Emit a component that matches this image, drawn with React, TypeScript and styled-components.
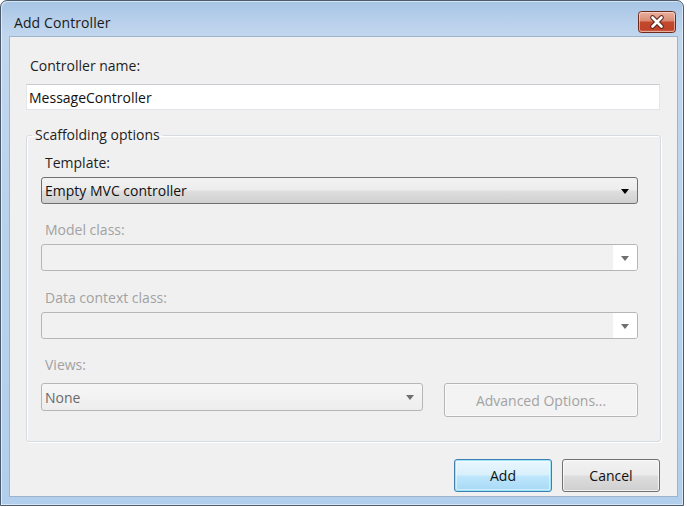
import React from "react";
import styled, { createGlobalStyle } from "styled-components";

const GlobalStyle = createGlobalStyle`
  html, body {
    margin: 0;
    padding: 0;
    width: 687px;
    height: 507px;
    overflow: hidden;
    background: #ffffff;
  }
  * { box-sizing: border-box; }
`;

const FONT = `"Open Sans", "Noto Sans", "DejaVu Sans", sans-serif`;

const Window = styled.div`
  width: 684px;
  height: 506px;
  border: 1px solid #4d5b6f;
  border-radius: 7px 7px 0 0;
  background: linear-gradient(180deg, #a6c4e5 0px, #b8d0eb 20px, #c1d7ee 36px, #bad3ec 200px, #b1cfec 100%);
  box-shadow: inset 1px 1px 0 rgba(255,255,255,0.55), inset -1px -1px 0 rgba(255,255,255,0.5);
  display: flex;
  flex-direction: column;
  padding: 0 5px 8px 8px;
  font-family: ${FONT};
`;

const TitleBar = styled.div`
  height: 35px;
  display: flex;
  align-items: center;
  justify-content: space-between;
  padding: 6px 2px 0 5px;
`;

const Title = styled.div`
  font-size: 14px;
  color: #1a1a1a;
  letter-spacing: 0.1px;
  margin-top: 1px;
`;

const CloseButton = styled.div`
  width: 38px;
  height: 22px;
  display: flex;
  align-items: center;
  justify-content: center;
`;

const Client = styled.div`
  flex: 1;
  background: #f0f0f0;
  border: 1px solid #9fb3cb;
  display: flex;
  flex-direction: column;
  padding: 19px 17px 3px 16px;
  color: #1e1e1e;
  font-size: 14px;
`;

const Label = styled.div<{ $disabled?: boolean; $indent?: number }>`
  height: 20px;
  line-height: 20px;
  font-size: 14px;
  color: ${(p) => (p.$disabled ? "#a2a2a2" : "#1e1e1e")};
  margin-left: ${(p) => p.$indent ?? 4}px;
`;

const TextInput = styled.div`
  margin-top: 8px;
  height: 26px;
  background: #ffffff;
  border: 1px solid #e2e5ea;
  border-top-color: #c9ccd1;
  display: flex;
  align-items: center;
  padding-left: 2px;
  font-size: 14px;
  color: #111;
`;

const Group = styled.fieldset`
  margin: 15px -1px 0 0;
  padding: 8px 22px 24px 14px;
  border: 1px solid #d5dbe0;
  border-radius: 3px;
  box-shadow: inset 1px 1px 0 #ffffff, 1px 1px 0 #ffffff;
  display: flex;
  flex-direction: column;
  min-width: 0;
`;

const Legend = styled.legend`
  margin-left: -9px;
  padding: 0 3px;
  height: 20px;
  line-height: 20px;
  font-size: 14px;
  color: #1e1e1e;
`;

const Field = styled.div<{ $top: number; $gap: number }>`
  margin-top: ${(p) => p.$top}px;
  display: flex;
  flex-direction: column;
  gap: ${(p) => p.$gap}px;
`;

const Combo = styled.div<{ $variant: "active" | "disabled" | "readonly"; $width?: number }>`
  height: ${(p) => (p.$variant === "readonly" ? 28 : 27)}px;
  ${(p) => (p.$width ? `width: ${p.$width}px;` : "")}
  border-radius: 3px;
  border: 1px solid ${(p) => (p.$variant === "active" ? "#707070" : "#b4b7ba")};
  background: ${(p) =>
    p.$variant === "active"
      ? "linear-gradient(180deg, #f3f3f3 0%, #ececec 48%, #dedede 52%, #d0d0d0 100%)"
      : p.$variant === "readonly"
      ? "linear-gradient(180deg, #f6f6f6 0%, #f2f2f2 50%, #ededed 100%)"
      : "#f1f1f1"};
  display: flex;
  align-items: stretch;
  overflow: hidden;
`;

const ComboText = styled.div<{ $muted?: boolean }>`
  flex: 1;
  display: flex;
  align-items: center;
  padding-left: 3px;
  font-size: 14px;
  color: ${(p) => (p.$muted ? "#6a6a6a" : "#111")};
`;

const ArrowBox = styled.div<{ $white?: boolean }>`
  width: 24px;
  display: flex;
  align-items: center;
  justify-content: center;
  background: ${(p) => (p.$white ? "#ffffff" : "transparent")};
`;

const Arrow = styled.div<{ $color: string }>`
  width: 0;
  height: 0;
  border-left: 4px solid transparent;
  border-right: 4px solid transparent;
  border-top: 5px solid ${(p) => p.$color};
  margin-top: 1px;
`;

const ViewsRow = styled.div`
  display: flex;
  align-items: flex-start;
  gap: 21px;
`;

const Button = styled.div<{ $kind: "default" | "normal" | "disabled"; $width: number; $height: number }>`
  width: ${(p) => p.$width}px;
  height: ${(p) => p.$height}px;
  border-radius: 3px;
  display: flex;
  align-items: center;
  justify-content: center;
  font-size: 14px;
  ${(p) =>
    p.$kind === "default"
      ? `
    border: 1px solid #3c7fb1;
    background: linear-gradient(180deg, #eaf6fd 0%, #d9f0fc 48%, #bee6fd 52%, #a7d9f5 100%);
    box-shadow: inset 0 0 0 1px #9fe3fb, inset 0 0 0 2px rgba(255,255,255,0.45);
    color: #111;
  `
      : p.$kind === "normal"
      ? `
    border: 1px solid #707070;
    background: linear-gradient(180deg, #f2f2f2 0%, #ebebeb 48%, #dddddd 52%, #cfcfcf 100%);
    box-shadow: inset 0 0 0 1px rgba(255,255,255,0.7);
    color: #111;
  `
      : `
    border: 1px solid #b4b7ba;
    background: #f3f3f3;
    box-shadow: inset 0 0 0 1px #fafafa;
    color: #a2a2a2;
  `}
`;

const Footer = styled.div`
  margin-top: 17px;
  display: flex;
  justify-content: flex-end;
  gap: 10px;
`;

function CloseIcon() {
  return (
    <svg width="38" height="22" viewBox="0 0 38 22">
      <defs>
        <linearGradient id="cg" x1="0" y1="0" x2="0" y2="1">
          <stop offset="0" stopColor="#eab3a2" />
          <stop offset="0.45" stopColor="#d98b74" />
          <stop offset="0.5" stopColor="#c3492d" />
          <stop offset="0.85" stopColor="#c04228" />
          <stop offset="1" stopColor="#d57a5f" />
        </linearGradient>
      </defs>
      <rect x="0.5" y="0.5" width="37" height="21" rx="3" fill="url(#cg)" stroke="#6e2a1e" />
      <rect x="1.5" y="1.5" width="35" height="19" rx="2" fill="none" stroke="rgba(255,230,220,0.55)" />
      <path d="M14.5 6.5 L23.5 15.5 M23.5 6.5 L14.5 15.5" stroke="#5b241a" strokeWidth="4.6" strokeLinecap="round" />
      <path d="M14.5 6.5 L23.5 15.5 M23.5 6.5 L14.5 15.5" stroke="#ffffff" strokeWidth="2.6" strokeLinecap="round" />
    </svg>
  );
}

function ComboBox({
  text,
  variant,
  width,
}: {
  text?: string;
  variant: "active" | "disabled" | "readonly";
  width?: number;
}) {
  return (
    <Combo $variant={variant} $width={width}>
      <ComboText $muted={variant === "readonly"}>{text ?? ""}</ComboText>
      <ArrowBox $white={variant === "disabled"}>
        <Arrow $color={variant === "active" ? "#000000" : "#6f6f6f"} />
      </ArrowBox>
    </Combo>
  );
}

export default function App() {
  return (
    <>
      <GlobalStyle />
      <Window>
        <TitleBar>
          <Title>Add Controller</Title>
          <CloseButton>
            <CloseIcon />
          </CloseButton>
        </TitleBar>
        <Client>
          <Label>Controller name:</Label>
          <TextInput>MessageController</TextInput>
          <Group>
            <Legend>Scaffolding options</Legend>
            <Field $top={0} $gap={4}>
              <Label>Template:</Label>
              <ComboBox variant="active" text="Empty MVC controller" />
            </Field>
            <Field $top={16} $gap={4}>
              <Label $disabled>Model class:</Label>
              <ComboBox variant="disabled" />
            </Field>
            <Field $top={17} $gap={4}>
              <Label $disabled>Data context class:</Label>
              <ComboBox variant="disabled" />
            </Field>
            <Field $top={16} $gap={8}>
              <Label $disabled>Views:</Label>
              <ViewsRow>
                <ComboBox variant="readonly" text="None" width={382} />
                <Button $kind="disabled" $width={194} $height={34}>
                  Advanced Options...
                </Button>
              </ViewsRow>
            </Field>
          </Group>
          <Footer>
            <Button $kind="default" $width={98} $height={33}>
              Add
            </Button>
            <Button $kind="normal" $width={98} $height={33}>
              Cancel
            </Button>
          </Footer>
        </Client>
      </Window>
    </>
  );
}
